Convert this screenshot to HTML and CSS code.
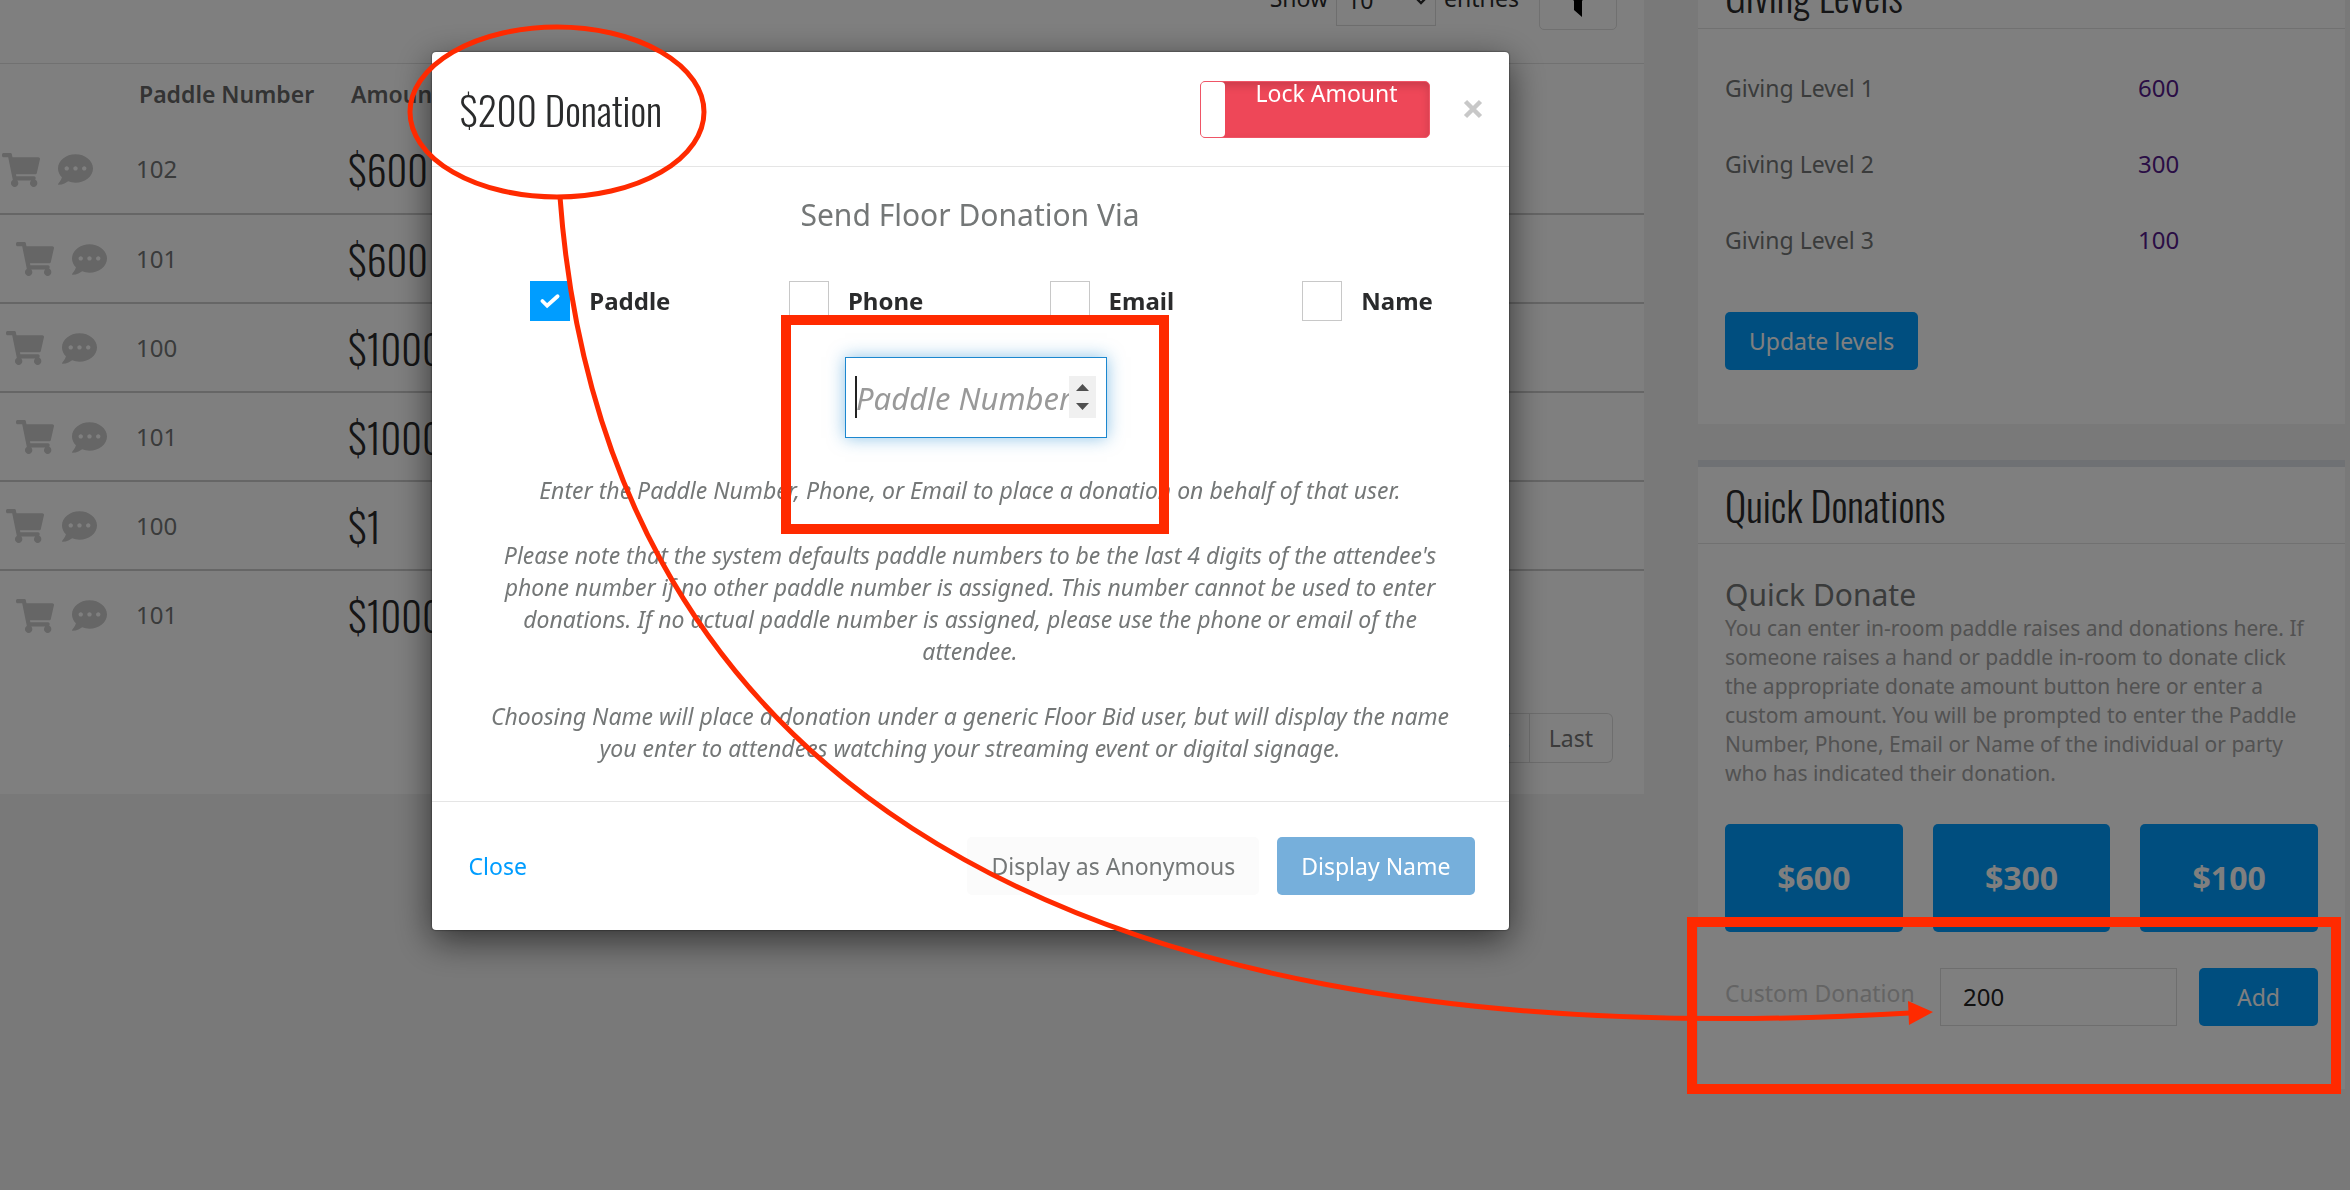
FILE: index.html
```html
<!DOCTYPE html>
<html lang="en">
<head>
  <meta charset="UTF-8">
  <meta name="viewport" content="width=device-width, initial-scale=1.0">
  <title>Floor Donations</title>
  <link rel="stylesheet" href="styles.css">
</head>
<body>
  <!-- Shared icons -->
  <svg class="sprite" aria-hidden="true">
    <symbol id="cart" viewBox="0 0 576 512">
      <path d="M528.12 301.319l47.273-208C578.806 78.301 567.391 64 551.99 64H159.208l-9.166-44.81C147.758 8.021 137.93 0 126.529 0H24C10.745 0 0 10.745 0 24v16c0 13.255 10.745 24 24 24h69.883l70.248 343.435C147.325 417.1 136 435.222 136 456c0 30.928 25.072 56 56 56s56-25.072 56-56c0-15.674-6.447-29.835-16.824-40h209.647C430.447 426.165 424 440.326 424 456c0 30.928 25.072 56 56 56s56-25.072 56-56c0-22.172-12.888-41.332-31.579-50.405l5.517-24.276c3.413-15.018-8.002-29.319-23.403-29.319H218.117l-6.545-32h293.145c11.206 0 20.92-7.754 23.403-18.681z"/>
    </symbol>
    <symbol id="comment" viewBox="0 0 512 512">
      <path d="M256 32C114.6 32 0 125.1 0 240c0 49.6 21.4 95 57 130.7C44.5 421.1 2.700 466 2.200 466.500c-2.200 2.300-2.800 5.700-1.500 8.700S4.800 480 8 480c66.300 0 116-31.800 140.600-51.400 32.700 12.300 69 19.400 107.400 19.400 141.400 0 256-93.100 256-208S397.400 32 256 32zM128 272c-17.700 0-32-14.300-32-32s14.300-32 32-32 32 14.300 32 32-14.300 32-32 32zm128 0c-17.700 0-32-14.300-32-32s14.300-32 32-32 32 14.300 32 32-14.300 32-32 32zm128 0c-17.700 0-32-14.300-32-32s14.300-32 32-32 32 14.300 32 32-14.300 32-32 32z"/>
    </symbol>
  </svg>

  <div class="page">
    <main class="panel bids">
      <div class="toolbar">
        <label for="pageSize">Show</label>
        <div class="select-wrap">
          <select id="pageSize">
            <option>10</option>
            <option>25</option>
            <option>50</option>
          </select>
          <svg class="caret" viewBox="0 0 12 8"><path d="M1 1l5 5 5-5"/></svg>
        </div>
        <span>entries</span>
        <button type="button" class="filter" aria-label="Filter">
          <svg viewBox="0 0 32 32"><path d="M1 1h30L20 15v16l-8-7v-9z"/></svg>
        </button>
      </div>
      <table>
        <thead>
          <tr><th class="col-icons"></th><th class="col-paddle">Paddle Number</th><th>Amount</th></tr>
        </thead>
        <tbody>
          <tr class="near">
            <td><svg class="cart"><use href="#cart"/></svg><svg class="comment"><use href="#comment"/></svg></td>
            <td>102</td>
            <td class="amount">$600</td>
          </tr>
          <tr class="far">
            <td><svg class="cart"><use href="#cart"/></svg><svg class="comment"><use href="#comment"/></svg></td>
            <td>101</td>
            <td class="amount">$600</td>
          </tr>
          <tr>
            <td><svg class="cart"><use href="#cart"/></svg><svg class="comment"><use href="#comment"/></svg></td>
            <td>100</td>
            <td class="amount">$1000</td>
          </tr>
          <tr class="far">
            <td><svg class="cart"><use href="#cart"/></svg><svg class="comment"><use href="#comment"/></svg></td>
            <td>101</td>
            <td class="amount">$1000</td>
          </tr>
          <tr>
            <td><svg class="cart"><use href="#cart"/></svg><svg class="comment"><use href="#comment"/></svg></td>
            <td>100</td>
            <td class="amount">$1</td>
          </tr>
          <tr class="far">
            <td><svg class="cart"><use href="#cart"/></svg><svg class="comment"><use href="#comment"/></svg></td>
            <td>101</td>
            <td class="amount">$1000</td>
          </tr>
        </tbody>
      </table>
      <nav class="pagination">
        <a href="#">Next</a>
        <a href="#">Last</a>
      </nav>
    </main>

    <aside>
      <section class="panel">
        <h2>Giving Levels</h2>
        <div class="levels">
          <dl>
            <dt>Giving Level 1</dt><dd><a href="#">600</a></dd>
            <dt>Giving Level 2</dt><dd><a href="#">300</a></dd>
            <dt>Giving Level 3</dt><dd><a href="#">100</a></dd>
          </dl>
          <button type="button" class="btn btn-primary">Update levels</button>
        </div>
      </section>

      <section class="panel panel-top">
        <h2>Quick Donations</h2>
        <div class="quick">
          <h3>Quick Donate</h3>
          <p>You can enter in-room paddle raises and donations here. If someone raises a hand or paddle in-room to donate click the appropriate donate amount button here or enter a custom amount. You will be prompted to enter the Paddle Number, Phone, Email or Name of the individual or party who has indicated their donation.</p>
          <div class="amounts">
            <button type="button">$600</button>
            <button type="button">$300</button>
            <button type="button">$100</button>
          </div>
          <form class="custom">
            <label for="customAmount">Custom Donation</label>
            <input type="text" id="customAmount" value="200">
            <button type="button" class="btn btn-primary">Add</button>
          </form>
        </div>
      </section>
    </aside>
  </div>

  <div class="backdrop">
    <form class="modal" role="dialog" aria-labelledby="modalTitle">
      <header>
        <h1 id="modalTitle">$200 Donation</h1>
        <button type="button" class="toggle"><span>Lock Amount</span></button>
        <button type="button" class="close" aria-label="Close">
          <svg viewBox="0 0 16 16"><path d="M3 3l10 10M13 3L3 13"/></svg>
        </button>
      </header>
      <div class="modal-body">
        <h3>Send Floor Donation Via</h3>
        <div class="via">
          <label><input type="checkbox" checked>Paddle</label>
          <label><input type="checkbox">Phone</label>
          <label><input type="checkbox">Email</label>
          <label><input type="checkbox">Name</label>
        </div>
        <div class="paddle">
          <input type="number" placeholder="Paddle Number" aria-label="Paddle Number">
          <span class="cursor"></span>
          <svg class="spinner" viewBox="0 0 27 42"><path d="M7 15l6.500-7 6.500 7zM7 27h13l-6.500 7z"/></svg>
        </div>
        <p>Enter the Paddle Number, Phone, or Email to place a donation on behalf of that user.</p>
        <p>Please note that the system defaults paddle numbers to be the last 4 digits of the attendee's phone number if no other paddle number is assigned. This number cannot be used to enter donations. If no actual paddle number is assigned, please use the phone or email of the attendee.</p>
        <p>Choosing Name will place a donation under a generic Floor Bid user, but will display the name you enter to attendees watching your streaming event or digital signage.</p>
      </div>
      <footer>
        <a href="#">Close</a>
        <button type="button" class="btn btn-light">Display as Anonymous</button>
        <button type="button" class="btn btn-name">Display Name</button>
      </footer>
    </form>
  </div>

  <!-- Red callouts on top of everything -->
  <svg class="callouts" viewBox="0 0 2350 1190" aria-hidden="true">
    <ellipse cx="557" cy="112" rx="147" ry="85" stroke-width="5"/>
    <path d="M560 197C600 740 1010 1066 1910 1013" stroke-width="5"/>
    <path class="head" d="M1908 1001l25 11-24 13z"/>
    <rect x="786" y="320" width="378" height="209" stroke-width="10"/>
    <rect x="1692" y="922" width="644" height="167" stroke-width="10"/>
  </svg>
</body>
</html>
```
FILE: styles.css
```css
/* Global Styles */
* {
  box-sizing: border-box;
}

body {
  margin: 0;
  font-family: "Noto Sans", "Open Sans", sans-serif;
  font-size: 23px;
  line-height: 32px;
  color: #747777;
  background: #f2f2f2;
  height: 100vh;
  overflow: hidden;
}

h1, h2, h3, p, dl, dd {
  margin: 0;
  font-weight: normal;
}

h1, h2, .amount {
  font-family: Oswald, "Liberation Sans Narrow", "Arial Narrow", sans-serif;
  font-weight: 300;
  color: #2a2b2c;
}

button, input, select {
  font: inherit;
}

a {
  text-decoration: none;
}

.sprite {
  display: none;
}

/* Page is scrolled down a little, so the top is cut off */
.page {
  margin-top: -40px;
  display: grid;
  grid-template-columns: 1fr 647px;
  gap: 54px;
  padding-right: 5px;
  align-items: start;
}

.panel {
  background: #fff;
}

.btn {
  height: 58px;
  padding: 0 24px;
  border: none;
  border-radius: 5px;
}

.btn-primary {
  background: #009dff;
  color: #fff;
}

/* Bids table */
.toolbar {
  height: 104px;
  padding: 14px 27px 0 0;
  display: flex;
  justify-content: flex-end;
  align-items: flex-start;
  gap: 8px;
  color: #2a2b2c;
  line-height: 48px;
  border-bottom: 1px solid #e2e2e2;
}

.select-wrap {
  position: relative;
}

.select-wrap select {
  width: 100px;
  height: 52px;
  padding: 0 10px;
  border: 1px solid #ddd;
  background: none;
  color: inherit;
  appearance: none;
}

.caret {
  position: absolute;
  right: 8px;
  top: 22px;
  width: 14px;
  fill: none;
  stroke: #2a2b2c;
  stroke-width: 2;
}

.filter {
  width: 78px;
  height: 56px;
  margin-left: 12px;
  padding: 0;
  border: 1px solid #e0e0e0;
  border-radius: 5px;
  background: none;
}

.filter svg {
  width: 32px;
  display: block;
  margin: auto;
}

.bids table {
  width: 100%;
  border-collapse: collapse;
  table-layout: fixed;
}

.bids th {
  height: 61px;
  padding: 0 0 2px 3px;
  text-align: left;
  font-weight: 600;
  color: #666;
}

.col-icons {
  width: 136px;
}

.col-paddle {
  width: 212px;
}

.bids td {
  height: 89px;
  padding: 0;
  border-bottom: 2px solid #ccc;
  font-size: 24px;
}

.bids tr:last-child td {
  border-bottom: none;
}

.bids td:first-child {
  padding-left: 6px;
}

.near td:first-child {
  padding-left: 2px;
}

.far td:first-child {
  padding-left: 16px;
}

.bids td.amount {
  font-size: 40px;
}

.bids td svg {
  vertical-align: middle;
  fill: #ccc;
}

.cart {
  width: 38px;
  height: 34px;
  margin-right: 18px;
}

.comment {
  width: 35px;
  height: 35px;
}

.pagination {
  display: flex;
  justify-content: flex-end;
  padding: 54px 31px 31px 0;
}

.pagination a {
  padding: 8px 19px;
  border: 1px solid #ddd;
  color: #777;
}

.pagination a + a {
  border-left: none;
  border-radius: 0 6px 6px 0;
}

/* Sidebar */
aside {
  display: grid;
  grid-template-columns: minmax(0, 1fr);
  gap: 36px;
}

aside h2 {
  height: 69px;
  padding: 0 27px;
  font-size: 40px;
  line-height: 70px;
  border-bottom: 1px solid #e2e2e2;
}

.panel-top {
  border-top: 7px solid #dfe3e8;
}

.panel-top h2 {
  height: 77px;
  line-height: 77px;
}

.levels {
  padding: 21px 27px 54px;
}

.levels dl {
  display: grid;
  grid-template-columns: 413px 1fr;
  line-height: 76px;
  margin-bottom: 34px;
}

.levels dd {
  font-size: 24px;
}

.levels a {
  color: #551a8b;
}

.quick {
  padding: 32px 27px 63px;
}

.quick h3 {
  font-size: 30px;
  line-height: 38px;
}

.quick p {
  font-size: 21px;
  line-height: 29px;
  color: #a4a4a4;
}

.amounts {
  display: grid;
  grid-template-columns: repeat(3, 1fr);
  gap: 30px;
  margin: 36px 0;
}

.amounts button {
  height: 108px;
  border: none;
  border-radius: 5px;
  background: #009dff;
  color: #fff;
  font-size: 32px;
  font-weight: bold;
}

.custom {
  display: flex;
  gap: 22px;
}

.custom label {
  width: 193px;
  line-height: 50px;
  color: #c8c8c8;
  white-space: nowrap;
}

.custom input {
  flex: 1;
  min-width: 0;
  padding: 0 22px;
  border: 1px solid #ddd;
  border-radius: 0;
  background: #fff;
  color: #222;
  font-size: 24px;
}

.custom .btn {
  width: 119px;
}

/* Modal */
.backdrop {
  position: fixed;
  inset: 0;
  padding: 52px 410px 0 0;
  background: rgba(0, 0, 0, 0.5);
}

.modal {
  max-width: 1077px;
  margin: 0 auto;
  background: #fff;
  border-radius: 4px;
  box-shadow: 0 10px 36px rgba(0, 0, 0, 0.6), 0 0 2px rgba(0, 0, 0, 0.8);
}

.modal header {
  height: 115px;
  padding: 0 24px 0 28px;
  display: flex;
  align-items: center;
  border-bottom: 1px solid #e5e5e5;
}

.modal h1 {
  flex: 1;
  font-size: 39px;
}

.toggle {
  width: 230px;
  height: 57px;
  padding: 0;
  display: flex;
  border: 1px solid #ef5566;
  border-radius: 5px;
  background: #ee4758;
  box-shadow: inset 0 4px 8px rgba(0, 0, 0, 0.15);
  color: #fff;
  line-height: 22px;
}

.toggle::before {
  content: "";
  width: 24px;
  height: 100%;
  border-radius: 4px;
  background: #fff;
}

.toggle span {
  flex: 1;
}

.close {
  width: 24px;
  margin-left: 31px;
  padding: 0;
  border: none;
  background: none;
}

.close svg {
  display: block;
  width: 24px;
  fill: none;
  stroke: #c8c8c8;
  stroke-width: 3;
}

.modal-body {
  padding: 29px 53px 37px;
  text-align: center;
}

.modal-body h3 {
  font-size: 30px;
  line-height: 38px;
}

.via {
  display: grid;
  grid-template-columns: repeat(4, 1fr);
  margin: 47px -40px 36px -12px;
}

.via label {
  display: flex;
  align-items: center;
  justify-content: center;
  gap: 19px;
  font-size: 24px;
  font-weight: bold;
  color: #2a2b2c;
}

.via input {
  appearance: none;
  width: 40px;
  height: 40px;
  margin: 0;
  border: 1px solid #c8c8c8;
  background: #fff;
}

.via input:checked {
  border-color: #009dff;
  background: #009dff url("data:image/svg+xml,%3Csvg xmlns='http://www.w3.org/2000/svg' viewBox='0 0 40 40'%3E%3Cpath d='M12 20l5 5 11-10' fill='none' stroke='white' stroke-width='4' stroke-linecap='round'/%3E%3C/svg%3E") center no-repeat;
}

.paddle {
  position: relative;
  width: 262px;
  margin: 0 auto 36px;
  left: 6px;
}

.paddle input {
  display: block;
  width: 100%;
  height: 81px;
  padding: 0 10px;
  border: 1px solid #1c87cf;
  box-shadow: 0 0 16px rgba(28, 135, 207, 0.5);
  font-size: 31px;
  appearance: textfield;
}

.paddle input::placeholder {
  color: #999;
  font-style: italic;
}

.paddle input::-webkit-inner-spin-button {
  display: none;
}

.cursor {
  position: absolute;
  left: 10px;
  top: 19px;
  width: 2px;
  height: 42px;
  background: #222;
}

.spinner {
  position: absolute;
  right: 11px;
  top: 19px;
  width: 27px;
  height: 42px;
  background: #f0f0f0;
  fill: #505050;
}

.modal-body p {
  font-style: italic;
}

.modal-body p + p {
  margin-top: 33px;
}

.modal footer {
  height: 129px;
  padding: 0 34px 0 37px;
  display: flex;
  align-items: center;
  gap: 18px;
  border-top: 1px solid #e5e5e5;
}

.modal footer a {
  margin-right: auto;
  color: #009dff;
}

.btn-light {
  background: #fbfbfb;
  color: #747777;
}

.btn-name {
  background: #76afdb;
  color: #fff;
}

.callouts {
  position: fixed;
  left: 0;
  top: 0;
  width: 100%;
  fill: none;
  stroke: #ff2a00;
}

.callouts .head {
  fill: #ff2a00;
  stroke: none;
}
```
